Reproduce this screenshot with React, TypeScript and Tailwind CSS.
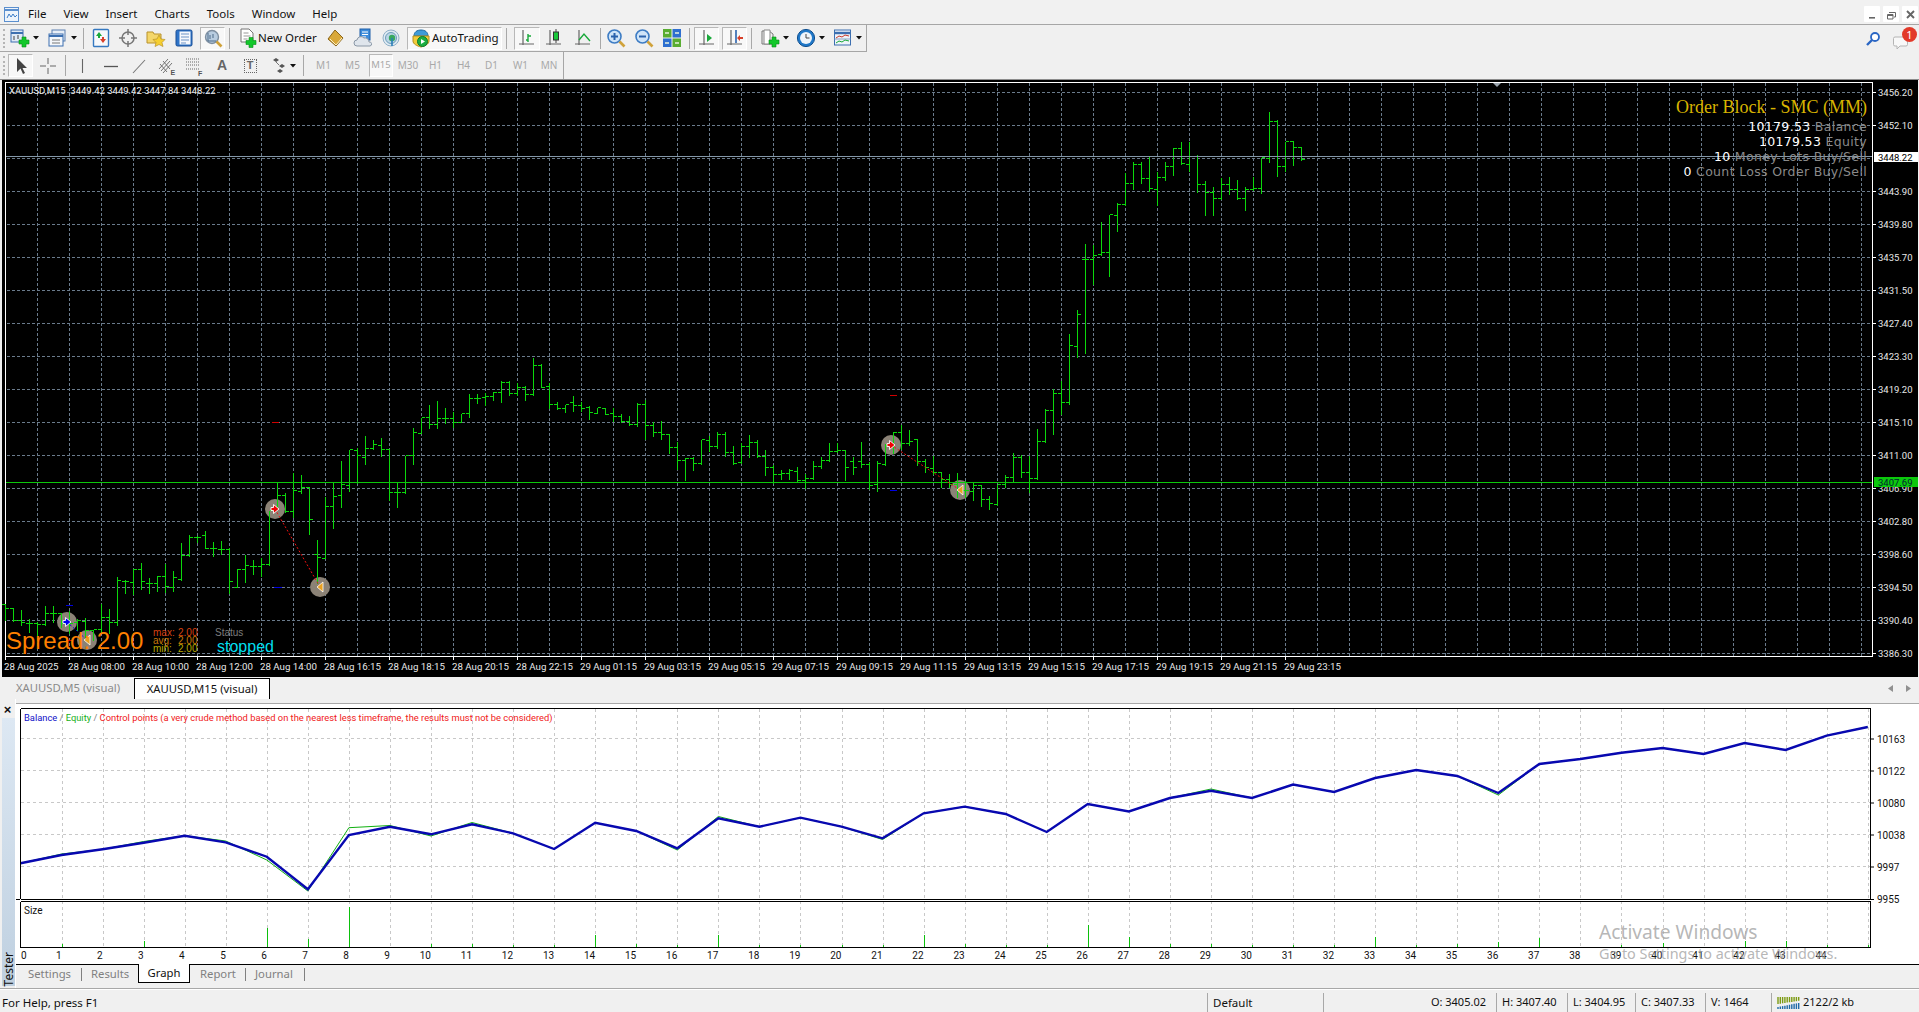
import React from "react";

const UI = "[font-family:'Noto_Sans',sans-serif]";

/* ---------- chart data: [high, low, open, close] in zoom units (page y = y0 + d / 3) ---------- */
const groups: [number, number[][]][] = [
  [430, [
    [520,570,522,535],[530,572,535,570],[538,585,570,575],[565,605,578,578],[572,615,578,582],[525,585,582,550],[525,575,550,548],[545,590,548,580],
    [540,610,580,578],[565,600,575,570],[562,630,572,600],[598,630,600,598],[520,605,598,560],[535,610,560,575],[438,585,575,450],[447,488,452,452],
    [415,492,455,418],[397,478,418,452],[440,490,458,460],[434,483,460,437],[398,487,437,467],[420,482,470,440],[337,450,448,375],[313,377,375,320],
    [315,335,322,320],[300,355,316,355],[332,378,355,355],[330,372,358,357],[352,490,358,452],[415,472,472,418],[373,455,418,405],[388,432,407,407],
    [380,438,407,402],[240,405,402,240],[155,238,235,195],[185,245,195,242],[127,260,242,180],[132,190,182,172],[172,312,172,268],[327,460,372,380],
    [198,385,385,227],[155,295,227,197],
  ]],
  [340, [
    [360,500,466,433],[328,452,435,328],[322,428,330,345],[285,372,352,325],[297,328,325,313],[292,348,314,328],[328,480,328,457],[423,500,457,457],
    [346,460,455,346],[262,372,346,277],[232,280,278,232],[192,263,232,253],[180,263,253,235],[202,248,235,235],[213,260,235,245],[218,245,245,218],
    [159,230,220,175],[160,188,175,175],[157,195,172,168],[154,180,168,156],[121,185,157,127],[121,166,127,160],[127,165,160,142],[136,180,142,163],
    [52,165,163,75],[70,142,75,140],[127,205,139,192],[184,208,192,205],[192,217,205,193],[166,213,187,196],[182,213,196,205],[194,236,202,217],
    [202,220,218,202],[205,223,205,221],
  ]],
  [380, [
    [82,122,100,109],[100,125,109,122],[105,135,122,133],[66,137,133,73],[57,178,73,135],[124,168,135,157],[120,177,157,163],[161,219,163,202],
    [184,266,202,241],[232,300,241,235],[227,270,235,250],[178,252,250,178],[165,212,181,199],[153,205,199,163],[153,228,163,217],[195,252,217,248],
    [187,248,247,199],[163,230,199,187],[178,232,187,229],[207,285,229,262],[252,308,262,283],[267,297,283,280],[264,297,280,271],[258,302,273,301],
    [278,324,301,295],[240,297,295,259],[228,264,259,240],[186,242,241,213],[187,217,214,210],[208,300,210,262],
  ]],
  [400, [
    [168,222,182,202],[124,200,182,192],[183,268,192,255],[180,272,253,190],[128,195,193,135],[92,160,135,95],[72,148,95,128],[87,135,128,122],
    [115,195,118,182],[175,216,182,202],[165,222,203,216],[213,262,216,237],[220,260,237,253],[216,290,253,270],[240,290,270,270],[243,300,272,256],
    [252,318,256,296],[285,327,296,310],[252,314,311,253],[222,262,253,232],
  ]],
  [180, [
    [817,907,892,832],[823,890,832,877],[825,935,877,895],[744,896,895,784],[685,786,784,691],[625,762,691,640],[600,703,640,667],[460,672,667,496],
    [388,530,499,403],
  ]],
  [100, [
    [430,760,478,478],[432,552,478,466],[363,465,463,457],[342,528,457,343],[306,393,346,313],[216,314,313,250],[183,267,250,193],[183,249,193,235],
    [165,273,235,265],[213,314,268,232],[183,240,232,199],[141,225,199,145],[123,193,145,190],[123,213,193,169],[162,276,169,253],[240,345,253,277],
    [258,345,277,295],[232,298,295,253],[228,282,253,268],[237,296,268,295],[258,330,295,268],[228,271,268,265],[172,279,265,172],[33,186,174,64],
    [57,228,64,199],[123,213,199,124],[123,195,124,142],[142,180,142,178],
  ]],
];

const barsPath = (() => {
  let d = "";
  let i = 0;
  for (const [y0, rows] of groups) {
    for (const [h, l, o, c] of rows) {
      const x = 5 + 8 * i + 0.5;
      const py = (v: number) => Math.round(y0 + v / 3) + 0.5;
      d += `M${x} ${py(h)}V${py(l)}M${x - 3.5} ${py(o)}H${x}M${x} ${py(c)}H${x + 3.5}`;
      i++;
    }
  }
  return d;
})();

const priceLabels = ["3456.20","3452.10","","3443.90","3439.80","3435.70","3431.50","3427.40","3423.30","3419.20","3415.10","3411.00","3406.90","3402.80","3398.60","3394.50","3390.40","3386.30"];
const timeLabels = ["28 Aug 2025","28 Aug 08:00","28 Aug 10:00","28 Aug 12:00","28 Aug 14:00","28 Aug 16:15","28 Aug 18:15","28 Aug 20:15","28 Aug 22:15","29 Aug 01:15","29 Aug 03:15","29 Aug 05:15","29 Aug 07:15","29 Aug 09:15","29 Aug 11:15","29 Aug 13:15","29 Aug 15:15","29 Aug 17:15","29 Aug 19:15","29 Aug 21:15","29 Aug 23:15"];

const balanceY = [863.3,855,849.3,842.7,835.7,842.3,856.7,889.3,835,826.7,834.3,824.3,833.3,849,822.7,831,848.3,818.3,826.7,817.7,826.7,838.3,813.3,806.6,814,832,804,811.5,798,790.7,798,784.6,792,778,770,776,793,764,759,752.8,748,754,743,750,735.6,727];
const equityOverride: Record<number, number> = { 1: 854, 3: 841.5, 5: 841, 6: 860, 7: 891, 8: 827.7, 9: 825.5, 10: 836, 11: 822.5, 16: 850, 17: 816.5, 21: 839.5, 29: 789, 36: 795 };
const gx = (k: number) => 20.5 + 41.05 * k;
const balancePts = balanceY.map((y, k) => `${gx(k)},${y}`).join(" ");
const equityPts = balanceY.map((y, k) => `${gx(k)},${equityOverride[k] ?? y}`).join(" ");
const sizeBars: [number, number][] = [[1,3],[3,6],[6,19],[7,8],[8,40],[10,3],[11,3],[12,2],[13,2],[14,12],[15,3],[16,2],[17,12],[18,2],[19,2],[20,2],[21,2],[22,12],[23,3],[24,2],[25,2],[26,22],[27,10],[28,3],[29,3],[30,2],[31,2],[32,2],[33,10],[34,2],[35,3],[36,5],[37,9],[39,2],[40,4],[42,6],[43,6],[44,2],[45,2]];
const graphLabels: [string, number][] = [["10163",739],["10122",771],["10080",803],["10038",835],["9997",867],["9955",899.5]];

/* ---------- icons ---------- */
const Caret = () => (
  <svg width="6" height="4" viewBox="0 0 6 4" className="shrink-0"><path d="M0 0h6L3 3.5z" fill="#111" /></svg>
);
const Plus = ({ x = 8, y = 8 }: { x?: number; y?: number }) => (
  <path transform={`translate(${x} ${y})`} d="M3 0h4v3h3v4H7v3H3V7H0V3h3z" fill="#12c82a" stroke="#0a8a1a" strokeWidth=".6" />
);
const I = ({ children, s = 20 }: { children: React.ReactNode; s?: number }) => (
  <svg width={s} height={s} viewBox="0 0 20 20" className="shrink-0">{children}</svg>
);
const NewChartIcon = () => (
  <I><rect x="1" y="2" width="12" height="12" fill="#dfeaf6" stroke="#3c6fb0" /><path d="M1 5h12" stroke="#3c6fb0" strokeWidth="2" /><path d="M4 8v4M8 7v4" stroke="#444" /><Plus x={9} y={9} /></I>
);
const ProfilesIcon = () => (
  <I><rect x="4" y="2" width="13" height="11" fill="#e8eef6" stroke="#5a7fb0" /><rect x="1" y="6" width="14" height="12" fill="#f4f7fb" stroke="#3c6fb0" /><path d="M1 8h14" stroke="#3c6fb0" strokeWidth="2" /><path d="M4 12h8M4 15h8" stroke="#777" /></I>
);
const MarketIcon = () => (
  <I><rect x="2.5" y="1.5" width="15" height="17" rx="1" fill="#f6f8fb" stroke="#3478c0" strokeWidth="1.4" /><path d="M8 4l3 4H9v2H7V8H5z" fill="#19a93a" /><path d="M12 15l-3-4h2V9h2v2h2z" fill="#d8402a" /></I>
);
const CrossCircleIcon = () => (
  <I><circle cx="10" cy="10" r="6" fill="none" stroke="#777" strokeWidth="1.5" /><path d="M10 1v6M10 13v6M1 10h6M13 10h6" stroke="#777" strokeWidth="1.5" /></I>
);
const FolderStarIcon = () => (
  <I><path d="M1 4h6l1 2h7v9H1z" fill="#f4d66a" stroke="#b8912a" /><path d="M13 7l2 4 4 .5-3 3 1 4-4-2-4 2 1-4-3-3 4-.5z" fill="#f6cf30" stroke="#b8912a" strokeWidth=".7" /></I>
);
const TerminalIcon = () => (
  <I><rect x="2" y="2" width="16" height="16" rx="1.5" fill="#2f74c8" stroke="#1a4f96" /><rect x="5.5" y="3.5" width="11" height="13" fill="#f6f8fc" /><path d="M7 6h8M7 9h8M7 12h8M7 15h5" stroke="#6d93c6" /></I>
);
const TesterIcon = () => (
  <I><circle cx="9" cy="9" r="6.5" fill="#b8cce0" stroke="#7d8ea0" strokeWidth="1.4" /><path d="M5 5v8h8" stroke="#4d6a88" fill="none" /><path d="M7 7v4M10 6v4" stroke="#4d6a88" /><path d="M13.5 13.5l5 5" stroke="#d0a23a" strokeWidth="2.6" /></I>
);
const NewOrderIcon = () => (
  <I><path d="M3 1h8l4 4v9H3z" fill="#fff" stroke="#777" /><path d="M5.5 5h5M5.5 8h7M5.5 11h4" stroke="#999" /><Plus x={8} y={9.5} /></I>
);
const BookIcon = () => (
  <I><path d="M9 2l8 8-7 8-8-7z" fill="#d9a83a" stroke="#8a6418" /><path d="M4 11l6 6 6-7" stroke="#fff3c8" fill="none" /></I>
);
const CloudDocIcon = () => (
  <I><rect x="7" y="1" width="10" height="11" fill="#3d8ddc" stroke="#1f5fa8" /><path d="M9 4h6M9 6.5h6M9 9h4" stroke="#fff" /><path d="M4 18a3 3 0 010-6 4 4 0 017-2 4 4 0 015 4 2 2 0 011 4z" fill="#dfe5ec" stroke="#8a97a6" /></I>
);
const SignalIcon = () => (
  <I><circle cx="10" cy="10" r="8" fill="#dfeaf2" stroke="#8fb0c8" /><circle cx="10" cy="10" r="5.5" fill="#bcd6e6" stroke="#6d9cba" /><circle cx="11" cy="10" r="3.2" fill="#38a860" /><path d="M11 10v8" stroke="#2a7fb8" strokeWidth="1.6" /></I>
);
const AutoTradingIcon = () => (
  <I><path d="M3 8c0-4 3-6 7-6s7 2 7 6z" fill="#3e9bd8" stroke="#1d6aa0" /><path d="M2 8h16v5c0 3-4 5-8 6-4-1-8-3-8-6z" fill="#f2cb3a" stroke="#b48f1c" /><circle cx="11.5" cy="13.5" r="5" fill="#1cae42" stroke="#0c7a2a" /><path d="M10 11l4 2.5-4 2.5z" fill="#fff" /></I>
);
const BarsIcon = () => (
  <I><path d="M6 2v15M2 16h15" stroke="#666" strokeWidth="1.2" /><path d="M11 6v8M11 12H9M11 8h3" stroke="#19a93a" strokeWidth="1.4" fill="none" /></I>
);
const CandleIcon = () => (
  <I><path d="M6 2v15M2 16h15" stroke="#666" strokeWidth="1.2" /><path d="M12 1v14" stroke="#444" /><rect x="9.5" y="4" width="5" height="8" fill="#19c83a" stroke="#333" /></I>
);
const LineIcon = () => (
  <I><path d="M6 2v15M2 16h15" stroke="#666" strokeWidth="1.2" /><path d="M6 12l5-6 6 7" stroke="#19a93a" strokeWidth="1.4" fill="none" /></I>
);
const ZoomIcon = ({ minus }: { minus?: boolean }) => (
  <I><circle cx="8.5" cy="8.5" r="6.5" fill="#cfe4f8" stroke="#3d7cc4" strokeWidth="1.6" /><path d={minus ? "M5 8.5h7" : "M5 8.5h7M8.5 5v7"} stroke="#2a62ac" strokeWidth="2" /><path d="M13.5 13.5l5 5" stroke="#d0a23a" strokeWidth="2.6" /></I>
);
const TileIcon = () => (
  <I><rect x="1" y="1" width="8.5" height="8.5" fill="#59ad32" /><rect x="10.5" y="1" width="8.5" height="8.5" fill="#2e6fd0" /><rect x="1" y="10.5" width="8.5" height="8.5" fill="#2e6fd0" /><rect x="10.5" y="10.5" width="8.5" height="8.5" fill="#59ad32" /><path d="M3 5h4M13 5h4M3 15h4M13 15h4" stroke="#e8f4e0" strokeWidth="1.4" /></I>
);
const ScrollIcon = () => (
  <I><path d="M7 2v15M2 16h15" stroke="#666" strokeWidth="1.2" /><path d="M10 6l5 4-5 4z" fill="#19a93a" /></I>
);
const ShiftIcon = () => (
  <I><path d="M6 2v15M2 16h15" stroke="#666" strokeWidth="1.2" /><path d="M11 2v13" stroke="#2a62ac" strokeWidth="1.6" /><path d="M18 9h-3V7l-3 3 3 3v-2h3z" fill="#d8402a" /></I>
);
const TemplateIcon = () => (
  <I><path d="M2 3h7l4 3v10H2z" fill="#f2f2f2" stroke="#777" /><path d="M4 2h6v14H4z" fill="#fff" stroke="#888" /><Plus x={9} y={9} /></I>
);
const ClockIcon = () => (
  <I><circle cx="10" cy="10" r="8.6" fill="#1f78c8" stroke="#0f4f90" /><circle cx="10" cy="10" r="6" fill="#eef4fa" /><path d="M10 6v4h3.5" stroke="#444" fill="none" /></I>
);
const IndicatorsIcon = () => (
  <I><rect x="1.5" y="2" width="16" height="15" fill="#eef3fa" stroke="#3c6fb0" /><path d="M1.5 5h16" stroke="#3c6fb0" strokeWidth="2.4" /><path d="M1.5 11h16" stroke="#8aa4c6" /><path d="M3 10l3-2 3 1 3-2 4 1" stroke="#c83a2a" fill="none" /><path d="M3 15l3-2 3 1 3-2 4 1" stroke="#19a93a" fill="none" /></I>
);
const CursorIcon = () => (
  <I><path d="M6 2v14l3.5-3.5 2.5 5.5 2-1-2.5-5H16z" fill="#444" /></I>
);
const CrossIcon = () => (
  <I><path d="M10 2v6M10 12v6M2 10h6M12 10h6" stroke="#666" /></I>
);
const VLineIcon = () => <I><path d="M10.5 3v14" stroke="#666" strokeWidth="1.1" /></I>;
const HLineIcon = () => <I><path d="M3 10.5h14" stroke="#555" strokeWidth="1.3" /></I>;
const TrendIcon = () => <I><path d="M4 17L16 4" stroke="#777" strokeWidth="1.1" /></I>;
const FiboChanIcon = () => (
  <I><path d="M2 13l9-10M4 15l9-10M6 17l9-10M3 8l7 8M6 5l7 8" stroke="#666" strokeWidth=".9" fill="none" /><text x="13.5" y="19" className="text-[7px] font-bold [font-family:'Liberation_Sans',sans-serif] fill-[#555]">E</text></I>
);
const FiboIcon = () => (
  <I><path d="M1 3h14M1 6h14M1 9h14M1 13h14" stroke="#666" strokeDasharray="1 1" /><text x="13" y="19.5" className="text-[7px] font-bold [font-family:'Liberation_Sans',sans-serif] fill-[#555]">F</text></I>
);
const TextBoxIcon = () => (
  <div className="w-[13px] h-[14px] border border-dotted border-[#666] flex items-center justify-center text-[11px] leading-none font-bold text-[#666] [font-family:'Liberation_Sans',sans-serif]">T</div>
);
const ArrowsIcon = () => (
  <I><path d="M4 4l3-2 3 2-3 2zM10 10l3-2 3 2-3 2zM8 15l3-2 3 2-3 2z" fill="#555" /><path d="M7 6l3 3" stroke="#777" /></I>
);
const LogoIcon = () => (
  <svg width="16" height="17" viewBox="0 0 16 17" className="shrink-0"><rect x=".5" y="1.5" width="14" height="14" fill="#eef4fb" stroke="#5b8fce" /><path d="M.5 4h14" stroke="#5b8fce" strokeWidth="2" /><path d="M3 12l2-4 2 3 2-3 2 3 2-2" stroke="#3a7cc8" fill="none" /></svg>
);

/* ---------- toolbar helpers ---------- */
const Grip = () => (
  <div className="w-[8px] h-full flex items-center justify-center shrink-0">
    <div className="w-[2px] h-[19px] border-l-2 border-dotted border-[#b5b5b5]" />
  </div>
);
const Sep = ({ w }: { w: string }) => (
  <div className={`${w} h-full flex items-center justify-center shrink-0`}><div className="w-px h-[21px] bg-[#a8a8a8]" /></div>
);
const Pressed = ({ children, w = "w-[25px]" }: { children: React.ReactNode; w?: string }) => (
  <div className={`${w} h-[23px] shrink-0 flex items-center justify-center bg-[#f8f8f8] border border-t-[#b8b8b8] border-l-[#b8b8b8] border-r-white border-b-white`}>{children}</div>
);
const C = ({ w, children }: { w: string; children?: React.ReactNode }) => (
  <div className={`${w} h-full flex items-center justify-center shrink-0`}>{children}</div>
);

const menuItems = ["File", "View", "Insert", "Charts", "Tools", "Window", "Help"];

function MenuBar() {
  return (
    <div className="h-[25px] shrink-0 flex items-center pt-[4px] border-b border-[#a6a6a6] bg-[#f1f1f1] relative">
      <div className="w-[28px] pl-[4px] shrink-0 flex items-center"><LogoIcon /></div>
      <div className={`flex items-center gap-[17px] text-[11.5px] text-[#111] ${UI}`}>
        {menuItems.map((m) => <span key={m}>{m}</span>)}
      </div>
      <div className="ml-auto flex items-center gap-[3px] pr-[1px]">
        {[
          <path key="a" d="M2 8h6v1.6H2z" fill="#666" />,
          <path key="b" d="M3 3.5h6.5V8H8M1.5 5.5H7V10H1.5z M1.5 6.5H7" fill="none" stroke="#666" strokeWidth="1" />,
          <path key="c" d="M2 2l7 7M9 2L2 9" fill="none" stroke="#666" strokeWidth="1.9" />,
        ].map((p, i) => (
          <div key={i} className="w-[16px] h-[16px] bg-white flex items-center justify-center rounded-[1px]">
            <svg width="11" height="11" viewBox="0 0 11 11">{p}</svg>
          </div>
        ))}
      </div>
    </div>
  );
}

function ToolbarOne() {
  return (
    <div className="h-[27px] shrink-0 flex bg-[#f0f0f0]">
      <div className="flex h-[27px] items-center border-b border-r border-[#a6a6a6] pr-[3px]">
        <Grip />
        <div className="w-[33px] h-full flex items-center pl-[2px] gap-[3px] shrink-0"><NewChartIcon /><Caret /></div>
        <div className="w-[37px] h-full flex items-center pl-[7px] gap-[3px] shrink-0"><ProfilesIcon /><Caret /></div>
        <Sep w="w-[10px]" />
        <C w="w-[26px]"><MarketIcon /></C>
        <C w="w-[28px]"><CrossCircleIcon /></C>
        <C w="w-[28px]"><FolderStarIcon /></C>
        <C w="w-[28px]"><TerminalIcon /></C>
        <C w="w-[2px]" />
        <Pressed><TesterIcon /></Pressed>
        <Sep w="w-[8px]" />
        <div className="w-[89px] h-full flex items-center pl-[5px] gap-0 shrink-0">
          <NewOrderIcon />
          <span className={`text-[11.5px] text-[#111] whitespace-nowrap ${UI}`}>New Order</span>
        </div>
        <C w="w-[27px]"><BookIcon /></C>
        <C w="w-[28px]"><CloudDocIcon /></C>
        <C w="w-[28px]"><SignalIcon /></C>
        <C w="w-[2px]" />
        <div className="w-[95px] h-[23px] shrink-0 flex items-center pl-[3px] gap-[1px] bg-[#f8f8f8] border border-t-[#b8b8b8] border-l-[#b8b8b8] border-r-white border-b-white">
          <AutoTradingIcon />
          <span className={`text-[11.5px] text-[#111] whitespace-nowrap ${UI}`}>AutoTrading</span>
        </div>
        <Sep w="w-[8px]" />
        <C w="w-[4px]" />
        <Pressed w="w-[26px]"><BarsIcon /></Pressed>
        <C w="w-[27px]"><CandleIcon /></C>
        <C w="w-[32px]"><LineIcon /></C>
        <Sep w="w-[3px]" />
        <C w="w-[28px]"><ZoomIcon /></C>
        <C w="w-[28px]"><ZoomIcon minus /></C>
        <C w="w-[28px]"><TileIcon /></C>
        <Sep w="w-[6px]" />
        <C w="w-[2px]" />
        <Pressed><ScrollIcon /></Pressed>
        <C w="w-[3px]" />
        <Pressed><ShiftIcon /></Pressed>
        <Sep w="w-[8px]" />
        <div className="w-[35px] h-full flex items-center pl-[5px] gap-[3px] shrink-0"><TemplateIcon /><Caret /></div>
        <div className="w-[35px] h-full flex items-center pl-[6px] gap-[3px] shrink-0"><ClockIcon /><Caret /></div>
        <div className="w-[38px] h-full flex items-center pl-[8px] gap-[3px] shrink-0"><IndicatorsIcon /><Caret /></div>
      </div>
      <div className="ml-auto flex items-center pr-[5px] gap-[12px]">
        <svg width="16" height="16" viewBox="0 0 16 16"><circle cx="10" cy="6" r="4" fill="#fff" stroke="#2a66c4" strokeWidth="1.8" /><path d="M7 9l-5 5" stroke="#2a66c4" strokeWidth="2.4" /></svg>
        <div className="relative w-[21px] h-[22px]">
          <svg width="16" height="14" viewBox="0 0 16 14" className="absolute left-0 bottom-0"><path d="M2 1h11a1.5 1.5 0 011.5 1.5v6A1.5 1.5 0 0113 10H7l-3 3v-3H2A1.5 1.5 0 01.5 8.5v-6A1.5 1.5 0 012 1z" fill="#f8f8f8" stroke="#b4b4b4" /></svg>
          <div className={`absolute right-[-3px] top-[-1px] w-[15px] h-[15px] rounded-full bg-[#e23a2a] text-white text-[11px] leading-[15px] text-center ${UI}`}>1</div>
        </div>
      </div>
    </div>
  );
}

const TF = ({ w, t }: { w: string; t: string }) => (
  <C w={w}><span className={`text-[10px] text-[#a8a8a8] ${UI}`}>{t}</span></C>
);

function ToolbarTwo() {
  return (
    <div className="h-[27px] shrink-0 flex bg-[#f0f0f0]">
      <div className="flex h-[27px] items-center border-r border-[#a6a6a6]">
        <Grip />
        <Pressed><CursorIcon /></Pressed>
        <C w="w-[30px]"><CrossIcon /></C>
        <Sep w="w-[4px]" />
        <C w="w-[30px]"><VLineIcon /></C>
        <C w="w-[28px]"><HLineIcon /></C>
        <C w="w-[28px]"><TrendIcon /></C>
        <C w="w-[28px]"><FiboChanIcon /></C>
        <C w="w-[28px]"><FiboIcon /></C>
        <C w="w-[26px]"><span className="text-[14px] font-bold text-[#666] [font-family:'Liberation_Sans',sans-serif]">A</span></C>
        <C w="w-[30px]"><TextBoxIcon /></C>
        <div className="w-[32px] h-full flex items-center pl-[4px] gap-[1px] shrink-0"><ArrowsIcon /><Caret /></div>
        <Sep w="w-[12px]" />
        <TF w="w-[29px]" t="M1" />
        <TF w="w-[29px]" t="M5" />
        <C w="w-[2px]" />
        <Pressed w="w-[24px]"><span className={`text-[9.5px] text-[#a8a8a8] ${UI}`}>M15</span></Pressed>
        <C w="w-[2px]" />
        <TF w="w-[26px]" t="M30" />
        <TF w="w-[29px]" t="H1" />
        <TF w="w-[27px]" t="H4" />
        <TF w="w-[29px]" t="D1" />
        <TF w="w-[29px]" t="W1" />
        <TF w="w-[28px]" t="MN" />
      </div>
    </div>
  );
}

const Marker = ({ x, y, kind }: { x: number; y: number; kind: "red" | "blue" | "close" }) => (
  <g transform={`translate(${x} ${y})`}>
    {kind === "close" ? (
      <path d="M3 -5V5L-3 0z" fill="#e8a020" stroke="#fff" strokeWidth=".8" />
    ) : (
      <path d="M-4 -1.5h2.5v-3l5.5 4.5-5.5 4.5v-3h-2.5z" fill={kind === "red" ? "#f00000" : "#0000f0"} stroke="#fff" strokeWidth=".9" />
    )}
  </g>
);

function PriceChart() {
  const hGrid = Array.from({ length: 18 }, (_, k) => 92 + 33 * k);
  const vGrid = Array.from({ length: 58 }, (_, k) => 37 + 32 * k);
  const circles: [number, number][] = [[67, 622], [87, 640], [275, 509], [320, 587], [891, 445], [960, 490]];
  return (
    <div className="relative h-[598px] shrink-0 bg-[#f0f0f0] overflow-hidden">
      <svg width="1919" height="598" viewBox="0 79 1919 598" className="block">
        <rect x="0" y="79" width="1919" height="598" fill="#f0f0f0" />
        <path d="M0 79.5H1919" stroke="#8c8c8c" />
        <rect x="2" y="80" width="1916" height="597" fill="#000" />
        <path d="M5.5 656.5V82.5H1872.5V656.5H5.5" fill="none" stroke="#fff" shapeRendering="crispEdges" />
        <g stroke="#6a7b8c" strokeDasharray="3 2" shapeRendering="crispEdges">
          {hGrid.map((y) => <path key={y} d={`M7 ${y + 0.5}H1872`} />)}
          {vGrid.map((x) => <path key={x} d={`M${x + 0.5} 83V656`} />)}
        </g>
        {circles.map(([x, y]) => <circle key={`${x}`} cx={x} cy={y} r="10" fill="#8b8276" />)}
        <path d={barsPath} stroke="#0bd70b" fill="none" shapeRendering="crispEdges" />
        <path d="M6 482.5H1872" stroke="#0bc80b" strokeWidth="1" shapeRendering="crispEdges" />
        <path d="M6 156.5H1872" stroke="#8497a8" strokeWidth="1" shapeRendering="crispEdges" />
        <g fill="none" strokeWidth="1">
          <path d="M275 509L320 587" stroke="#f01010" strokeDasharray="2 2" />
          <path d="M891 445L960 490" stroke="#f01010" strokeDasharray="2 2" />
          <path d="M67 622L87 640" stroke="#0000e0" strokeDasharray="2 2" />
          <path d="M66 605.5h7M274 587.5h8M890 490.5h7" stroke="#0000e0" />
          <path d="M66 640.5h7M272 422.5h7M890 395.5h7" stroke="#d00000" />
        </g>
        <Marker x={67} y={622} kind="blue" />
        <Marker x={87} y={640} kind="close" />
        <Marker x={275} y={509} kind="red" />
        <Marker x={320} y={587} kind="close" />
        <Marker x={891} y={445} kind="red" />
        <Marker x={960} y={490} kind="close" />
        <path d="M1493 83h8l-4 4z" fill="#9aa4ad" />
        {/* price axis */}
        <g className="text-[9.5px] [font-family:Roboto,sans-serif] fill-[#e8e8e8]">
          {priceLabels.map((t, k) => t && (
            <g key={t}>
              <path d={`M1873 ${92.5 + 33 * k}h3`} stroke="#fff" />
              <text x="1878" y={96 + 33 * k}>{t}</text>
            </g>
          ))}
        </g>
        <rect x="1874" y="152" width="44" height="10" fill="#fff" />
        <text x="1878" y="160.5" className="text-[9.5px] [font-family:Roboto,sans-serif] fill-black">3448.22</text>
        <rect x="1874" y="477" width="44" height="10" fill="#0cc80c" />
        <text x="1878" y="485.5" className="text-[9.5px] [font-family:Roboto,sans-serif] fill-[#023]">3407.69</text>
        {/* time axis */}
        <g className="text-[9.7px] [font-family:Roboto,sans-serif] fill-[#e8e8e8]">
          {timeLabels.map((t, k) => (
            <g key={t}>
              <path d={`M${5.5 + 64 * k} 656v4`} stroke="#fff" />
              <text x={4 + 64 * k} y="669.5">{t}</text>
            </g>
          ))}
        </g>
      </svg>

      <div className="absolute left-[9px] top-[6px] text-[9.5px] leading-[12px] whitespace-pre text-[#f2f2f2] [font-family:Roboto,sans-serif]">XAUUSD,M15  3449.42 3449.42 3447.84 3448.22</div>

      <div className="absolute right-[52px] top-[17px] text-right whitespace-nowrap">
        <div className="text-[18px] leading-[22px] text-[#d8b400] [font-family:'Liberation_Serif',serif]">Order Block - SMC (MM)</div>
        <div className="text-[12.5px] leading-[15px] mt-[1px] tracking-[0.33px] text-[#8a8a8a] [font-family:'DejaVu_Sans',sans-serif]">
          <div><span className="text-white">10179.53</span> Balance</div>
          <div><span className="text-white">10179.53</span> Equity</div>
          <div><span className="text-white">10</span> Money Lots Buy/Sell</div>
          <div><span className="text-white">0</span> Count Loss Order Buy/Sell</div>
        </div>
      </div>

      <div className="absolute left-[6px] top-[548px] text-[24px] leading-[28px] whitespace-nowrap text-[#ff8000] [font-family:'Liberation_Sans',sans-serif]">Spread: 2.00</div>
      <div className="absolute left-[153px] top-[550px] text-[10px] leading-[8px] [font-family:'Liberation_Sans',sans-serif] whitespace-pre">
        <div className="flex text-[#d84010]"><span className="w-[25px]">max:</span><span>2.00</span></div>
        <div className="flex text-[#c87808]"><span className="w-[25px]">avg:</span><span>2.00</span></div>
        <div className="flex text-[#b8a800]"><span className="w-[25px]">min:</span><span>2.00</span></div>
      </div>
      <div className="absolute left-[215px] top-[548px] text-[10px] leading-[12px] text-[#7c7c7c] [font-family:'Liberation_Sans',sans-serif]">Status</div>
      <div className="absolute left-[217px] top-[558px] text-[16px] leading-[20px] text-[#00dff0] [font-family:'Liberation_Sans',sans-serif]">stopped</div>
    </div>
  );
}

function ChartTabs() {
  return (
    <div className="h-[22px] shrink-0 flex items-end pl-[2px] bg-[#f0f0f0] relative">
      <div className={`w-[132px] h-[21px] flex items-center justify-center text-[11.3px] text-[#8a8a8a] ${UI}`}>XAUUSD,M5 (visual)</div>
      <div className={`w-[136px] h-[21px] flex items-center justify-center bg-white border-l border-r border-t border-black text-[11.3px] text-[#111] ${UI}`}>XAUUSD,M15 (visual)</div>
      <div className="ml-auto h-[21px] flex items-center gap-[13px] pr-[8px]">
        <svg width="5" height="7" viewBox="0 0 5 7"><path d="M5 0v7L0 3.5z" fill="#909090" /></svg>
        <svg width="5" height="7" viewBox="0 0 5 7"><path d="M0 0v7l5-3.5z" fill="#909090" /></svg>
      </div>
    </div>
  );
}

function Graph() {
  return (
    <div className="relative h-[265px] shrink-0">
      <svg width="1903" height="265" viewBox="16 699 1903 265" className="block">
        <rect x="16" y="699" width="1903" height="265" fill="#fff" />
        <rect x="16" y="699" width="1903" height="4" fill="#f0f0f0" />
        <path d="M16 703.5H1919" stroke="#a8a8a8" />
        <g stroke="#c8c8c8" strokeDasharray="3 3" shapeRendering="crispEdges">
          {Array.from({ length: 45 }, (_, k) => k + 1).map((k) => (
            <path key={k} d={`M${Math.round(gx(k)) + 0.5} 709V947`} />
          ))}
          {graphLabels.slice(0, 5).map(([t, y]) => <path key={t} d={`M21 ${y - 0.5}H1870`} />)}
        </g>
        <polyline points={equityPts} fill="none" stroke="#10b010" strokeWidth="1" />
        <polyline points={balancePts} fill="none" stroke="#0808b0" strokeWidth="2.4" />
        <path d="M20.5 708.5H1870.5V899M20.5 708.5V899M20.5 899.5H1870.5M20.5 901.5H1870.5M20.5 901.5V947.5H1870.5V901.5" fill="none" stroke="#000" shapeRendering="crispEdges" />
        <path d="M20 899.5h-4" stroke="#000" />
        {sizeBars.map(([k, h]) => (
          <path key={k} d={`M${Math.round(gx(k)) + 0.5} ${947 - h}V947`} stroke="#0cc00c" shapeRendering="crispEdges" />
        ))}
        <g className="text-[10px] [font-family:Roboto,sans-serif] fill-[#111]">
          {graphLabels.map(([t, y]) => (
            <g key={t}>
              <path d={`M1871 ${y}h3`} stroke="#000" />
              <text x="1877" y={y + 3.5}>{t}</text>
            </g>
          ))}
          <text x="21" y="959">0</text>
          {Array.from({ length: 44 }, (_, k) => k + 1).map((k) => (
            <text key={k} x={gx(k)} y="959" textAnchor="end">{k}</text>
          ))}
          <text x="24" y="914">Size</text>
          <text x="24" y="721" className="whitespace-pre text-[9.33px]">
            <tspan className="fill-[#1010c8]">Balance</tspan>
            <tspan className="fill-[#808080]"> / </tspan>
            <tspan className="fill-[#18b018]">Equity</tspan>
            <tspan className="fill-[#808080]"> / </tspan>
            <tspan className="fill-[#f01818]">Control points (a very crude method based on the nearest less timeframe, the results must not be considered)</tspan>
          </text>
        </g>
      </svg>
      <div className={`absolute left-[1583px] top-[219px] text-[19.2px] leading-[27px] whitespace-nowrap text-[#a4a4a4]/80 ${UI}`}>Activate Windows</div>
      <div className={`absolute left-[1583px] top-[246px] text-[14.4px] leading-[18px] whitespace-nowrap text-[#a4a4a4]/80 ${UI}`}>Go to Settings to activate Windows.</div>
    </div>
  );
}

function TesterTabs() {
  return (
    <div className={`h-[24px] shrink-0 flex items-start border-t border-black bg-[#f0f0f0] text-[11.3px] text-[#808080] ${UI}`}>
      <div className="w-[65px] h-[19px] flex items-center pl-[12px]">Settings</div>
      <div className="w-px h-[13px] mt-[3px] bg-[#808080]" />
      <div className="w-[56px] h-[19px] flex items-center pl-[9px]">Results</div>
      <div className="w-[52px] h-[19px] -mt-px flex items-center justify-center bg-white border-l border-r border-b border-black text-[#111] shrink-0">Graph</div>
      <div className="w-[55px] h-[19px] flex items-center pl-[10px]">Report</div>
      <div className="w-px h-[13px] mt-[3px] bg-[#808080]" />
      <div className="w-[58px] h-[19px] flex items-center pl-[9px]">Journal</div>
      <div className="w-px h-[13px] mt-[3px] bg-[#808080]" />
    </div>
  );
}

function Tester() {
  return (
    <div className="h-[289px] shrink-0 flex bg-[#f0f0f0]">
      <div className="w-[16px] shrink-0 flex flex-col items-center border-r border-white">
        <div className="h-[18px] mt-[1px] flex items-center justify-center text-[13px] font-bold leading-none text-[#111] [font-family:'Liberation_Sans',sans-serif]">×</div>
        <div className={`flex-1 w-[13px] ml-[2px] mb-[2px] flex items-end justify-center bg-gradient-to-b from-[#dde8f3] to-[#bfd0e0]`}>
          <span className={`[writing-mode:vertical-rl] rotate-180 text-[12px] leading-[13px] text-[#111] ${UI}`}>Tester</span>
        </div>
      </div>
      <div className="flex-1 flex flex-col min-w-0">
        <Graph />
        <TesterTabs />
      </div>
    </div>
  );
}

const StatusCell = ({ w, children }: { w: string; children: React.ReactNode }) => (
  <div className={`${w} h-[19px] shrink-0 flex items-center pl-[5px] border-l border-[#a8a8a8]`}>{children}</div>
);

function StatusBar() {
  return (
    <div className={`h-[24px] shrink-0 flex items-center pt-[4px] border-t border-[#a8a8a8] bg-[#f0f0f0] text-[11px] text-[#111] whitespace-nowrap shadow-[inset_0_1px_0_#fff] ${UI}`}>
      <div className="w-[1207px] pl-[2px] shrink-0 text-[11.5px]">For Help, press F1</div>
      <StatusCell w="w-[116px]"><span className="text-[11.5px]">Default</span></StatusCell>
      <div className="w-[173px] h-[19px] shrink-0 flex items-center justify-end pr-[10px] border-l border-[#a8a8a8]">O: 3405.02</div>
      <StatusCell w="w-[71px]">H: 3407.40</StatusCell>
      <StatusCell w="w-[68px]">L: 3404.95</StatusCell>
      <StatusCell w="w-[70px]">C: 3407.33</StatusCell>
      <StatusCell w="w-[66px]">V: 1464</StatusCell>
      <StatusCell w="w-[148px]">
        <svg width="24" height="14" viewBox="0 0 24 14" className="mr-[2px] shrink-0">
          {Array.from({ length: 10 }, (_, i) => (
            <g key={i}>
              <path d={`M${1 + i * 2.3} 1v${7 - i * 0.35}`} stroke="#7c9a12" strokeWidth="1.4" />
              <path d={`M${1 + i * 2.3} 13v-${2 + i * 0.45}`} stroke="#1f6aa8" strokeWidth="1.4" />
            </g>
          ))}
        </svg>
        <span>2122/2 kb</span>
      </StatusCell>
    </div>
  );
}

export default function App() {
  return (
    <div className="w-[1919px] h-[1012px] flex flex-col overflow-hidden bg-[#f0f0f0]">
      <MenuBar />
      <ToolbarOne />
      <ToolbarTwo />
      <PriceChart />
      <ChartTabs />
      <Tester />
      <StatusBar />
    </div>
  );
}
